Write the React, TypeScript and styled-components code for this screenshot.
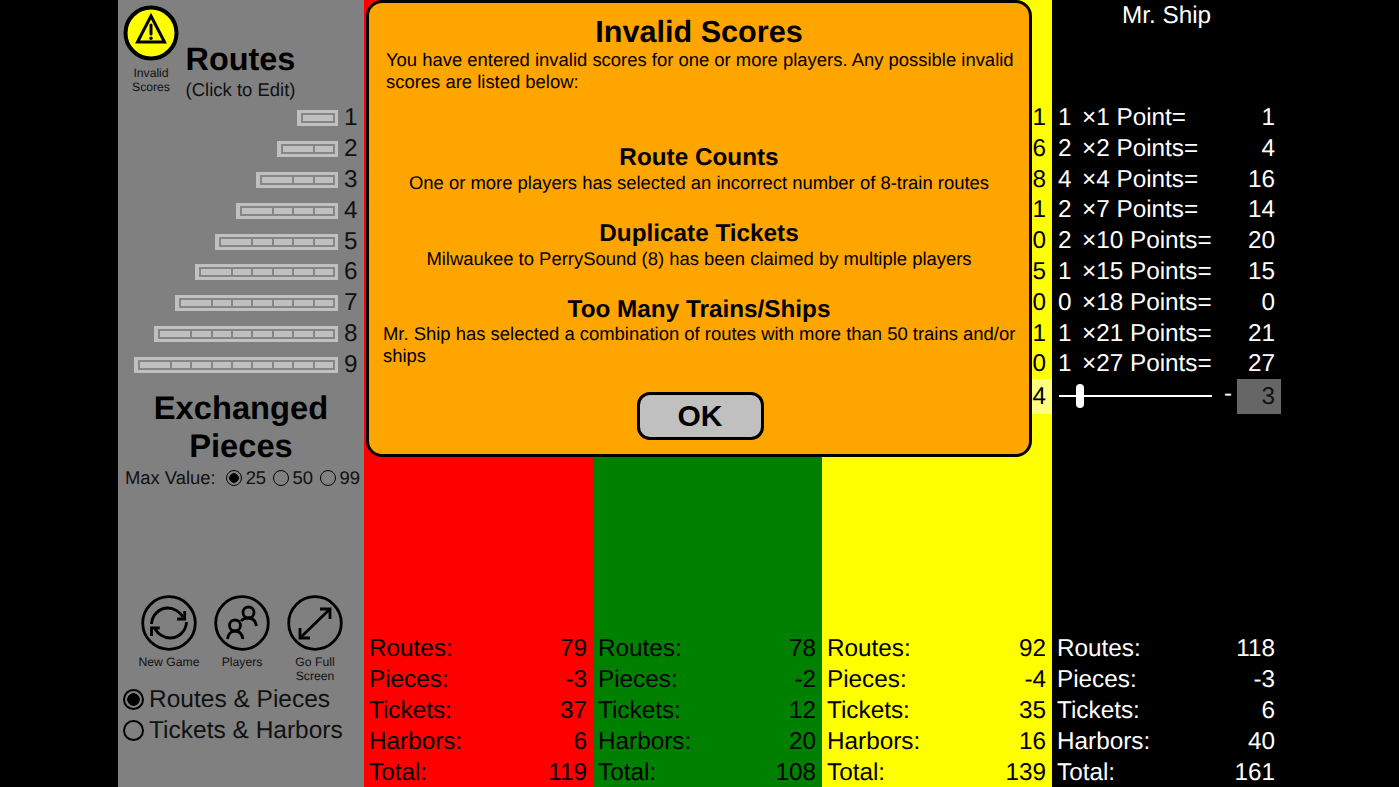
import styled, { createGlobalStyle } from 'styled-components';

const routeRows = [1, 2, 3, 4, 5, 6, 7, 8, 9];

const shipRows = [
  { count: 1, label: '×1 Point=', value: 1 },
  { count: 2, label: '×2 Points=', value: 4 },
  { count: 4, label: '×4 Points=', value: 16 },
  { count: 2, label: '×7 Points=', value: 14 },
  { count: 2, label: '×10 Points=', value: 20 },
  { count: 1, label: '×15 Points=', value: 15 },
  { count: 0, label: '×18 Points=', value: 0 },
  { count: 1, label: '×21 Points=', value: 21 },
  { count: 1, label: '×27 Points=', value: 27 },
];

const yellowCounts = [1, 6, 8, 1, 0, 5, 0, 1, 0];

const players = [
  { color: '#ff0000', ink: '#000', totals: [79, -3, 37, 6, 119] },
  { color: '#008000', ink: '#000', totals: [78, -2, 12, 20, 108] },
  { color: '#ffff00', ink: '#000', totals: [92, -4, 35, 16, 139], counts: yellowCounts, edit: 4 },
];

const totalLabels = ['Routes:', 'Pieces:', 'Tickets:', 'Harbors:', 'Total:'];

const GlobalStyle = createGlobalStyle`
  html, body {
    margin: 0;
    height: 100%;
    background: #000;
    overflow: hidden;
  }
  body {
    font-family: "Liberation Sans", Arial, sans-serif;
    text-rendering: geometricPrecision;
  }
`;

const Board = styled.div`
  position: relative;
  display: grid;
  grid-template-columns: 246px 229px 229px 230px 229px;
  width: 1163px;
  height: 787px;
  margin-left: 118px;
  overflow: hidden;
`;

const Sidebar = styled.aside`
  background: #808080;
  display: flex;
  flex-direction: column;
  color: #000;
`;

const SideTop = styled.div`
  display: flex;
  height: 103px;
  padding: 5px 0 0 5px;
  box-sizing: border-box;
`;

const AlertButton = styled.div`
  width: 56px;
  display: flex;
  flex-direction: column;
  align-items: center;
  font-size: 12.2px;
  line-height: 14px;
  text-align: center;
  color: #111;
`;

const RoutesTitle = styled.div`
  width: 110px;
  margin: 36px 0 0 6.5px;
  text-align: center;
  white-space: nowrap;

  h2 {
    margin: 0;
    font-size: 32.4px;
    line-height: 36px;
    font-weight: 700;
  }
  span {
    display: block;
    font-size: 18.5px;
    line-height: 25px;
    color: #111;
  }
`;

const RouteRow = styled.div`
  height: 30.8px;
  display: flex;
  justify-content: flex-end;
  align-items: center;
  padding-right: 7px;
`;

const PieceBar = styled.div`
  display: flex;
  height: 16px;
  box-sizing: border-box;
  padding: 3px 3px 3px 4px;
  background: #c0c0c0;
`;

const Piece = styled.div<{ $first: boolean }>`
  box-sizing: border-box;
  width: ${(p) => (p.$first ? '34px' : '20.4px')};
  border: 2px solid #868686;
  ${(p) => (p.$first ? '' : 'border-left: 0;')}
`;

const RouteNumber = styled.span`
  width: 13px;
  margin-left: 6px;
  font-size: 24.3px;
  text-align: right;
  color: #111;
`;

const ExchangeTitle = styled.h2`
  margin: 8.8px 0 0;
  font-size: 32.7px;
  line-height: 38px;
  font-weight: 700;
  text-align: center;
`;

const MaxRow = styled.div`
  display: flex;
  align-items: center;
  height: 26px;
  padding-left: 7px;
  font-size: 18.4px;
  color: #111;
  white-space: nowrap;
`;

const MaxLabel = styled.span`
  margin-right: 10px;
`;

const SmallRadio = styled.span<{ $on?: boolean }>`
  box-sizing: border-box;
  width: 16px;
  height: 16px;
  margin-right: 4px;
  border-radius: 50%;
  border: 1.5px solid #000;
  background: ${(p) => (p.$on ? 'radial-gradient(circle, #000 0 4.5px, transparent 5px)' : 'transparent')};
`;

const MaxOption = styled.span`
  margin-right: 6.5px;
`;

const ToolRow = styled.div`
  display: flex;
  margin-top: auto;
  padding-left: 14.5px;
`;

const Tool = styled.div`
  width: 73px;
  height: 89px;
  display: flex;
  flex-direction: column;
  align-items: center;
  font-size: 12.2px;
  line-height: 14px;
  text-align: center;
  color: #111;

  svg {
    margin-bottom: 4px;
    flex: none;
  }
`;

const ViewRadios = styled.div`
  padding: 0 0 41px 5px;
`;

const ViewRow = styled.div`
  display: flex;
  align-items: center;
  height: 31px;
  font-size: 24.5px;
  color: #111;
  white-space: nowrap;
`;

const ViewRadio = styled.span<{ $on?: boolean }>`
  box-sizing: border-box;
  width: 21px;
  height: 21px;
  margin-right: 5px;
  border-radius: 50%;
  border: 2px solid #000;
  background: ${(p) => (p.$on ? 'radial-gradient(circle, #000 0 6px, transparent 6.5px)' : 'transparent')};
`;

const Column = styled.section<{ $bg: string; $ink: string }>`
  background: ${(p) => p.$bg};
  color: ${(p) => p.$ink};
  display: flex;
  flex-direction: column;
  font-size: 24.3px;
`;

const ColumnHead = styled.div`
  height: 103px;
  padding-top: 2px;
  box-sizing: border-box;
  line-height: 28px;
  text-align: center;
`;

const CountRow = styled.div`
  height: 30.8px;
  line-height: 30.8px;
  padding-right: 6px;
  text-align: right;
`;

const EditCell = styled.div`
  align-self: flex-end;
  width: 14px;
  height: 35px;
  margin-top: -1.2px;
  line-height: 35px;
  background: #ffff80;
  padding-right: 6px;
  text-align: right;
`;

const ShipRow = styled.div`
  display: grid;
  grid-template-columns: 24px 1fr auto;
  height: 30.8px;
  line-height: 30.8px;
  padding: 0 6px;
  white-space: nowrap;
`;

const SliderRow = styled.div`
  display: flex;
  align-items: center;
  height: 35px;
  margin-top: -1.2px;
  padding-left: 7px;
`;

const SliderTrack = styled.div`
  position: relative;
  width: 153px;
  height: 2px;
  background: #fff;
`;

const SliderThumb = styled.div`
  position: absolute;
  left: 17px;
  top: -11px;
  width: 8px;
  height: 24px;
  border-radius: 4px;
  background: #fff;
`;

const Dash = styled.span`
  width: 25px;
  padding-left: 7px;
  box-sizing: border-box;
  text-align: center;
  font-size: 24px;
  line-height: 24px;
  margin-top: -5px;
`;

const EditValue = styled.div`
  width: 44px;
  height: 35px;
  box-sizing: border-box;
  padding-right: 6px;
  line-height: 35px;
  text-align: right;
  background: #666;
  color: #111;
`;

const Totals = styled.div`
  margin-top: auto;
  margin-bottom: -1px;
  padding: 0 6px 0 5px;
`;

const TotalRow = styled.div`
  display: flex;
  justify-content: space-between;
  height: 31px;
  line-height: 31px;
`;

const Modal = styled.div`
  position: absolute;
  left: 248px;
  top: 0;
  width: 666px;
  height: 457px;
  box-sizing: border-box;
  padding-top: 13px;
  border: 3px solid #000;
  border-radius: 16px;
  background: #ffa500;
  color: #000;
  display: flex;
  flex-direction: column;
  align-items: center;
`;

const ModalTitle = styled.h1`
  margin: 0 0 1px;
  font-size: 30.6px;
  line-height: 32px;
  font-weight: 700;
`;

const ModalText = styled.p`
  align-self: stretch;
  margin: 0;
  padding: 0 12px 0 17px;
  font-size: 18.45px;
  line-height: 22px;
  height: 44px;
`;

const Issue = styled.div`
  align-self: stretch;
  margin-top: 25px;
  text-align: center;
  font-size: 18.45px;
  line-height: 22px;

  &:first-of-type {
    margin-top: 50px;
  }

  h3 {
    margin: 0;
    padding-top: 1px;
    font-size: 24.3px;
    line-height: 28px;
    font-weight: 700;
  }
`;

const WideNote = styled.p`
  margin: -1px 0 0;
  padding: 0 12px 0 14px;
  text-align: left;
`;

const OkButton = styled.button`
  margin: 25px 0 0 2px;
  width: 127px;
  height: 48px;
  box-sizing: border-box;
  border: 3px solid #000;
  border-radius: 13px;
  background: #c0c0c0;
  color: #000;
  font-family: inherit;
  font-size: 30px;
  font-weight: 700;
  line-height: 1;
  padding: 0;
`;

const AlertIcon = () => (
  <svg width="56" height="56" viewBox="0 0 56 56" style={{ flex: 'none', marginBottom: 5 }}>
    <circle cx="28" cy="28" r="25.5" fill="#ffff00" stroke="#000" strokeWidth="4" />
    <path d="M28 11 L41.5 37 H14.5 Z" fill="none" stroke="#000" strokeWidth="3" />
    <path d="M28 20 V29" stroke="#000" strokeWidth="3" strokeLinecap="round" />
    <circle cx="28" cy="33.2" r="1.7" fill="#000" />
  </svg>
);

const ToolIcon = ({ children }: { children: React.ReactNode }) => (
  <svg width="56" height="56" viewBox="0 0 56 56" fill="none" stroke="#000" strokeWidth="2.8">
    <circle cx="28" cy="28" r="26.3" />
    {children}
  </svg>
);

const Pieces = ({ count }: { count: number }) => (
  <PieceBar>
    {Array.from({ length: count }, (_, i) => (
      <Piece key={i} $first={i === 0} />
    ))}
  </PieceBar>
);

export default function App() {
  return (
    <>
      <GlobalStyle />
      <Board>
        <Sidebar>
          <SideTop>
            <AlertButton>
              <AlertIcon />
              Invalid
              <br />
              Scores
            </AlertButton>
            <RoutesTitle>
              <h2>Routes</h2>
              <span>(Click to Edit)</span>
            </RoutesTitle>
          </SideTop>
          {routeRows.map((n) => (
            <RouteRow key={n}>
              <Pieces count={n} />
              <RouteNumber>{n}</RouteNumber>
            </RouteRow>
          ))}
          <ExchangeTitle>
            Exchanged
            <br />
            Pieces
          </ExchangeTitle>
          <MaxRow>
            <MaxLabel>Max Value:</MaxLabel>
            <SmallRadio $on />
            <MaxOption>25</MaxOption>
            <SmallRadio />
            <MaxOption>50</MaxOption>
            <SmallRadio />
            <span>99</span>
          </MaxRow>
          <ToolRow>
            <Tool>
              <ToolIcon>
                <path d="M10.5 29 C11 20 18 13 27 13 C33 13 39 17 42 22" />
                <path d="M43.7 16 V24 H36" />
                <path d="M45.5 27 C45 36 38 43 29 43 C23 43 17 39 14 34" />
                <path d="M10.5 41 V33 H18.7" />
              </ToolIcon>
              New Game
            </Tool>
            <Tool>
              <ToolIcon>
                <circle cx="21" cy="30.5" r="5.5" />
                <path d="M13.5 44 C14 39 17 36 21 36 C25 36 28 39 29 44" />
                <circle cx="34.5" cy="17.5" r="5.5" />
                <path d="M27 26 C29 23.5 31 23 34.5 23 C39 23 41.5 26 42.5 31" />
              </ToolIcon>
              Players
            </Tool>
            <Tool>
              <ToolIcon>
                <path d="M13 43 L43 14" />
                <path d="M33 14 H43 V24" />
                <path d="M13 33 V43 H23" />
              </ToolIcon>
              Go Full Screen
            </Tool>
          </ToolRow>
          <ViewRadios>
            <ViewRow>
              <ViewRadio $on />
              Routes &amp; Pieces
            </ViewRow>
            <ViewRow>
              <ViewRadio />
              Tickets &amp; Harbors
            </ViewRow>
          </ViewRadios>
        </Sidebar>

        {players.map((player) => (
          <Column key={player.color} $bg={player.color} $ink={player.ink}>
            {player.counts && <ColumnHead />}
            {player.counts?.map((c, i) => <CountRow key={i}>{c}</CountRow>)}
            {player.edit !== undefined && <EditCell>{player.edit}</EditCell>}
            <Totals>
              {totalLabels.map((label, i) => (
                <TotalRow key={label}>
                  <span>{label}</span>
                  <span>{player.totals[i]}</span>
                </TotalRow>
              ))}
            </Totals>
          </Column>
        ))}

        <Column $bg="#000" $ink="#fff">
          <ColumnHead>Mr. Ship</ColumnHead>
          {shipRows.map((row) => (
            <ShipRow key={row.label}>
              <span>{row.count}</span>
              <span>{row.label}</span>
              <span>{row.value}</span>
            </ShipRow>
          ))}
          <SliderRow>
            <SliderTrack>
              <SliderThumb />
            </SliderTrack>
            <Dash>-</Dash>
            <EditValue>3</EditValue>
          </SliderRow>
          <Totals>
            {totalLabels.map((label, i) => (
              <TotalRow key={label}>
                <span>{label}</span>
                <span>{[118, -3, 6, 40, 161][i]}</span>
              </TotalRow>
            ))}
          </Totals>
        </Column>

        <Modal>
          <ModalTitle>Invalid Scores</ModalTitle>
          <ModalText>
            You have entered invalid scores for one or more players. Any possible invalid scores are listed below:
          </ModalText>
          <Issue>
            <h3>Route Counts</h3>
            One or more players has selected an incorrect number of 8-train routes
          </Issue>
          <Issue>
            <h3>Duplicate Tickets</h3>
            Milwaukee to PerrySound (8) has been claimed by multiple players
          </Issue>
          <Issue>
            <h3>Too Many Trains/Ships</h3>
            <WideNote>Mr. Ship has selected a combination of routes with more than 50 trains and/or ships</WideNote>
          </Issue>
          <OkButton>OK</OkButton>
        </Modal>
      </Board>
    </>
  );
}
